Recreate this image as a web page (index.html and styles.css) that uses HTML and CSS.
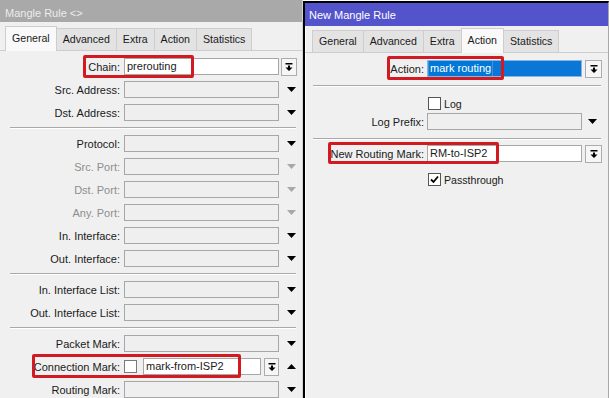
FILE: index.html
```html
<!DOCTYPE html>
<html lang="en">

<head>
  <meta charset="UTF-8" />
  <meta name="viewport" content="width=device-width, initial-scale=1.0" />
  <title>Mangle Rule</title>
  <link rel="stylesheet" href="styles.css">
</head>

<body>
  <div class="desk">
    <!-- existing rule, General tab -->
    <div class="win win-left">
      <div class="title">Mangle Rule &lt;&gt;</div>
      <div class="tabs">
        <span class="tab active">General</span>
        <span class="tab">Advanced</span>
        <span class="tab">Extra</span>
        <span class="tab">Action</span>
        <span class="tab">Statistics</span>
      </div>
      <div class="panel">
        <div class="section first">
          <div class="row">
            <span class="lbl">Chain:</span>
            <span class="field white">prerouting</span>
            <span class="end"><span class="btn"><svg width="8" height="8" viewBox="0 0 8 8"><rect x="0.5" y="0" width="7" height="1.5"/><path d="M3 2.5h2v2h2.5L4 8 0.5 4.5H3z"/></svg></span></span>
            <span class="mark mark-chain"></span>
          </div>
          <div class="row">
            <span class="lbl">Src. Address:</span>
            <span class="field"></span>
            <span class="end"><svg class="tri" width="9" height="5" viewBox="0 0 9 5"><polygon points="0,0 9,0 4.5,5"/></svg></span>
          </div>
          <div class="row">
            <span class="lbl">Dst. Address:</span>
            <span class="field"></span>
            <span class="end"><svg class="tri" width="9" height="5" viewBox="0 0 9 5"><polygon points="0,0 9,0 4.5,5"/></svg></span>
          </div>
        </div>
        <div class="sep"></div>
        <div class="section">
          <div class="row">
            <span class="lbl">Protocol:</span>
            <span class="field"></span>
            <span class="end"><svg class="tri" width="9" height="5" viewBox="0 0 9 5"><polygon points="0,0 9,0 4.5,5"/></svg></span>
          </div>
          <div class="row off">
            <span class="lbl">Src. Port:</span>
            <span class="field"></span>
            <span class="end"><svg class="tri" width="9" height="5" viewBox="0 0 9 5"><polygon points="0,0 9,0 4.5,5"/></svg></span>
          </div>
          <div class="row off">
            <span class="lbl">Dst. Port:</span>
            <span class="field"></span>
            <span class="end"><svg class="tri" width="9" height="5" viewBox="0 0 9 5"><polygon points="0,0 9,0 4.5,5"/></svg></span>
          </div>
          <div class="row off">
            <span class="lbl">Any. Port:</span>
            <span class="field"></span>
            <span class="end"><svg class="tri" width="9" height="5" viewBox="0 0 9 5"><polygon points="0,0 9,0 4.5,5"/></svg></span>
          </div>
          <div class="row">
            <span class="lbl">In. Interface:</span>
            <span class="field"></span>
            <span class="end"><svg class="tri" width="9" height="5" viewBox="0 0 9 5"><polygon points="0,0 9,0 4.5,5"/></svg></span>
          </div>
          <div class="row">
            <span class="lbl">Out. Interface:</span>
            <span class="field"></span>
            <span class="end"><svg class="tri" width="9" height="5" viewBox="0 0 9 5"><polygon points="0,0 9,0 4.5,5"/></svg></span>
          </div>
        </div>
        <div class="sep"></div>
        <div class="section">
          <div class="row">
            <span class="lbl">In. Interface List:</span>
            <span class="field"></span>
            <span class="end"><svg class="tri" width="9" height="5" viewBox="0 0 9 5"><polygon points="0,0 9,0 4.5,5"/></svg></span>
          </div>
          <div class="row">
            <span class="lbl">Out. Interface List:</span>
            <span class="field"></span>
            <span class="end"><svg class="tri" width="9" height="5" viewBox="0 0 9 5"><polygon points="0,0 9,0 4.5,5"/></svg></span>
          </div>
        </div>
        <div class="sep"></div>
        <div class="section">
          <div class="row">
            <span class="lbl">Packet Mark:</span>
            <span class="field"></span>
            <span class="end"><svg class="tri" width="9" height="5" viewBox="0 0 9 5"><polygon points="0,0 9,0 4.5,5"/></svg></span>
          </div>
          <div class="row">
            <span class="lbl">Connection Mark:</span>
            <span class="combo">
              <span class="check"></span>
              <span class="field white short">mark-from-ISP2</span>
              <span class="btn"><svg width="8" height="8" viewBox="0 0 8 8"><rect x="0.5" y="0" width="7" height="1.5"/><path d="M3 2.5h2v2h2.5L4 8 0.5 4.5H3z"/></svg></span>
            </span>
            <span class="end"><svg class="tri" width="9" height="5" viewBox="0 0 9 5"><polygon points="0,5 9,5 4.5,0"/></svg></span>
            <span class="mark mark-conn"></span>
          </div>
          <div class="row">
            <span class="lbl">Routing Mark:</span>
            <span class="field"></span>
            <span class="end"><svg class="tri" width="9" height="5" viewBox="0 0 9 5"><polygon points="0,0 9,0 4.5,5"/></svg></span>
          </div>
        </div>
      </div>
    </div>

    <!-- new rule, Action tab -->
    <div class="win win-right">
      <div class="title">New Mangle Rule</div>
      <div class="tabs">
        <span class="tab">General</span>
        <span class="tab">Advanced</span>
        <span class="tab">Extra</span>
        <span class="tab active">Action</span>
        <span class="tab">Statistics</span>
      </div>
      <div class="panel">
        <div class="section first pad-b">
          <div class="row">
            <span class="lbl">Action:</span>
            <span class="field selected"><span class="sel">mark routing</span></span>
            <span class="end"><span class="btn"><svg width="8" height="8" viewBox="0 0 8 8"><rect x="0.5" y="0" width="7" height="1.5"/><path d="M3 2.5h2v2h2.5L4 8 0.5 4.5H3z"/></svg></span></span>
            <span class="mark mark-action"></span>
          </div>
        </div>
        <div class="sep"></div>
        <div class="section log">
          <div class="row short-row">
            <span class="lbl"></span>
            <span class="opt"><span class="check"></span>Log</span>
          </div>
          <div class="row">
            <span class="lbl">Log Prefix:</span>
            <span class="field"></span>
            <span class="end"><svg class="tri" width="9" height="5" viewBox="0 0 9 5"><polygon points="0,0 9,0 4.5,5"/></svg></span>
          </div>
        </div>
        <div class="sep"></div>
        <div class="section pass">
          <div class="row">
            <span class="lbl">New Routing Mark:</span>
            <span class="field white">RM-to-ISP2</span>
            <span class="end"><span class="btn"><svg width="8" height="8" viewBox="0 0 8 8"><rect x="0.5" y="0" width="7" height="1.5"/><path d="M3 2.5h2v2h2.5L4 8 0.5 4.5H3z"/></svg></span></span>
            <span class="mark mark-nrm"></span>
          </div>
          <div class="row short-row">
            <span class="lbl"></span>
            <span class="opt"><span class="check on"><svg width="9" height="9" viewBox="0 0 9 9"><path d="M1 4.5l2.5 2.5L8 1.5" fill="none" stroke="#000" stroke-width="1.8"/></svg></span>Passthrough</span>
          </div>
        </div>
      </div>
    </div>
  </div>
</body>

</html>
```

FILE: styles.css
```css
html, body {
  margin: 0;
  height: 100%;
  overflow: hidden;
  background: #fff;
}
body {
  font-family: "Liberation Sans", Arial, sans-serif;
  font-size: 11px;
  color: #1a1a1a;
}
.desk {
  display: flex;
  align-items: flex-start;
  height: 398px;
}
.win {
  background: #f0f0f0;
  height: 420px;
}
.win-left {
  width: 302px;
  border-right: 1px solid #d2d2d2;
}
.win-right {
  width: 303px;
  margin-top: 1px;
  border-left: 2px solid #000;
  border-top: 2px solid #000;
  border-right: 1px solid #a8a8a8;
  box-shadow: inset 1px 0 #fff;
}
.title {
  height: 22px;
  box-sizing: border-box;
  padding: 6px 0 0 5px;
  line-height: 14px;
  font-size: 11px;
  background: #a9a9a9;
  color: #ececec;
}
.win-right .title {
  height: 23px;
  padding: 5px 0 0 4px;
  background: #5353cc;
  color: #fff;
}

/* tab strip */
.tabs {
  display: flex;
  align-items: flex-end;
  height: 28px;
  padding-left: 5px;
}
.win-right .tabs {
  height: 26px;
  padding-left: 7px;
}
.tab {
  height: 22px;
  box-sizing: border-box;
  padding: 0 6px;
  line-height: 21px;
  font-size: 10.6px;
  background: #e3e3e3;
  border: 1px solid #cdcdcd;
  border-bottom: none;
  margin-right: -1px;
}
.tab.active {
  height: 25px;
  line-height: 22px;
  background: #f9f9f9;
  margin-bottom: -1px;
  position: relative;
  padding: 0 6px;
}
.panel {
  border-top: 1px solid #cdcdcd;
}

/* form rows */
.section {
  display: flex;
  flex-direction: column;
  gap: 6px;
  padding: 6px 0;
}
.section.first {
  padding-top: 7px;
}
.section.pad-b {
  padding-bottom: 8px;
}
.section.log {
  padding: 10px 0 8px;
  gap: 3px;
}
.section.pass {
  padding-top: 5px;
  gap: 11px;
}
.sep {
  border-top: 1px solid #a9a9a9;
  border-bottom: 1px solid #fff;
  margin: 0 6px 0 10px;
}
.win-right .sep {
  margin: 0 7px 0 8px;
}
.row {
  position: relative;
  display: flex;
  align-items: center;
  height: 17px;
}
.row.short-row {
  height: 13px;
}
.lbl {
  width: 120px;
  flex: none;
  text-align: right;
  white-space: nowrap;
}
.win-right .lbl {
  width: 119px;
}
.row.off .lbl {
  color: #8e8e8e;
}
.field {
  width: 155px;
  height: 17px;
  flex: none;
  margin-left: 4px;
  box-sizing: border-box;
  border: 1px solid #a7a7a7;
  background: #efefef;
  padding-left: 2px;
  line-height: 15px;
  white-space: nowrap;
  overflow: hidden;
}
.win-right .field {
  margin-left: 3px;
}
.field.white {
  background: #fff;
}
.field.selected {
  background: #0a76d6;
  border-color: #82b6e6;
  color: #fff;
  padding-left: 1px;
}
.field .sel {
  display: inline-block;
  padding: 0 1px;
  background: #0078d7;
  box-shadow: 0 0 0 1px #3d94dd;
}
.end {
  width: 17px;
  flex: none;
  margin-left: 2px;
  display: flex;
  align-items: center;
}
.win-right .end {
  margin-left: 3px;
}
.end .tri {
  margin-left: 6px;
  fill: #000;
}
.win-right .end .tri {
  margin-left: 3px;
}
.row.off .tri {
  fill: #a8a8a8;
}
.btn {
  width: 16px;
  height: 18px;
  box-sizing: border-box;
  border: 1px solid #acacac;
  background: #f6f6f6;
  display: flex;
  align-items: center;
  justify-content: center;
  flex: none;
}
.win-right .btn {
  width: 17px;
}

/* connection mark combo */
.combo {
  width: 155px;
  margin-left: 4px;
  display: flex;
  align-items: center;
  flex: none;
}
.combo .field.short {
  width: 118px;
  margin-left: 6px;
}
.combo .btn {
  margin-left: 3px;
  width: 15px;
}
.check {
  width: 13px;
  height: 13px;
  box-sizing: border-box;
  border: 1px solid #555;
  background: #fff;
  flex: none;
  display: flex;
  align-items: center;
  justify-content: center;
}
.combo .check {
  border-color: #7a7a7a;
}
.opt {
  display: flex;
  align-items: center;
  gap: 3px;
  margin-left: 4px;
  font-size: 10.6px;
}

/* red annotation boxes */
.mark {
  position: absolute;
  box-sizing: border-box;
  border: 3px solid #d11a22;
  border-radius: 2px;
}
.mark-chain {
  left: 83px;
  top: -3px;
  width: 111px;
  height: 23px;
}
.mark-conn {
  left: 32px;
  top: -4px;
  width: 209px;
  height: 24px;
}
.mark-action {
  left: 82px;
  top: -4px;
  width: 117px;
  height: 24px;
}
.mark-nrm {
  left: 23px;
  top: -3px;
  width: 171px;
  height: 22px;
}
```
